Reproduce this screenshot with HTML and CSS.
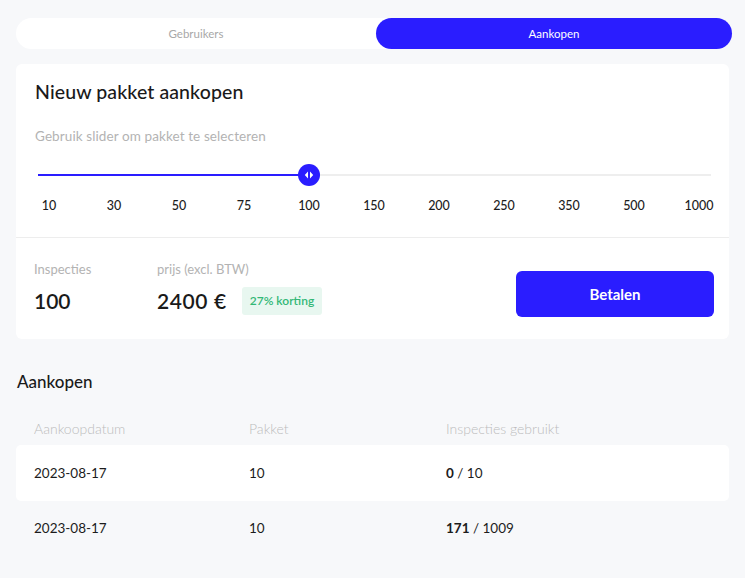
FILE: index.html
```html
<!DOCTYPE html>
<html lang="nl">
<head>
<meta charset="utf-8">
<link rel="stylesheet" href="styles.css">
</head>
<body>
<div class="page">
  <div class="tabs">
    <div class="tab">Gebruikers</div>
    <div class="tab active">Aankopen</div>
  </div>

  <div class="card">
    <div class="card-top">
      <h1 class="title">Nieuw pakket aankopen</h1>
      <p class="hint">Gebruik slider om pakket te selecteren</p>
      <div class="slider">
        <div class="track">
          <div class="fill" style="width: 271px"></div>
          <div class="thumb" style="left: 271px">
            <svg width="10" height="8" viewBox="0 0 10 8"><path d="M4 0.5 L0.8 4 L4 7.5 Z M6 0.5 L9.2 4 L6 7.5 Z" fill="#fff"/></svg>
          </div>
        </div>
        <div class="ticks">
          <span>10</span><span>30</span><span>50</span><span>75</span><span>100</span><span>150</span><span>200</span><span>250</span><span>350</span><span>500</span><span>1000</span>
        </div>
      </div>
    </div>
    <div class="card-bottom">
      <div class="stat">
        <div class="stat-label">Inspecties</div>
        <div class="stat-value">100</div>
      </div>
      <div class="stat price">
        <div class="stat-label">prijs (excl. BTW)</div>
        <div class="price-row">
          <div class="stat-value">2400 €</div>
          <span class="badge">27% korting</span>
        </div>
      </div>
      <button class="pay">Betalen</button>
    </div>
  </div>

  <h2 class="section">Aankopen</h2>
  <div class="table">
    <div class="row head">
      <div>Aankoopdatum</div><div>Pakket</div><div>Inspecties gebruikt</div>
    </div>
    <div class="row odd">
      <div>2023-08-17</div><div>10</div><div><b>0</b> / 10</div>
    </div>
    <div class="row">
      <div>2023-08-17</div><div>10</div><div><b>171</b> / 1009</div>
    </div>
  </div>
</div>
</body>
</html>
```
FILE: styles.css
```css
* { box-sizing: border-box; }
html, body { margin: 0; padding: 0; }
body {
  background: #f7f8fa;
  font-family: Lato, "Noto Sans", sans-serif;
  color: #1c1c1c;
  width: 745px;
  height: 578px;
  overflow: hidden;
}
.page {
  padding: 18px 13px 0 16px;
}
.tabs {
  display: flex;
  height: 31px;
  background: #fff;
  border-radius: 16px;
}
.tab {
  flex: 0 0 360px;
  display: flex;
  align-items: center;
  justify-content: center;
  font-size: 11.5px;
  color: #a8a8a8;
  border-radius: 16px;
}
.tab.active {
  flex: 1;
  background: #2a1dff;
  color: #fff;
}
.card {
  margin-top: 15px;
  width: 713px;
  background: #fff;
  border-radius: 6px;
}
.card-top {
  padding: 17px 16px 0 19px;
  border-bottom: 1px solid #ededed;
  height: 174px;
}
.title {
  margin: 0;
  font-size: 19.5px;
  font-weight: 500;
  line-height: 22px;
  letter-spacing: 0.1px;
  color: #1a1a1a;
}
.hint {
  margin: 25px 0 0 0;
  font-size: 13.5px;
  line-height: 16px;
  letter-spacing: 0.1px;
  color: #b3b3b3;
}
.slider {
  margin-top: 30px;
  padding-left: 3px;
}
.track {
  position: relative;
  width: 673px;
  height: 2px;
  background: #eeeeee;
}
.fill {
  height: 2px;
  background: #2a1dff;
}
.thumb {
  position: absolute;
  top: -10px;
  margin-left: -11px;
  width: 22px;
  height: 22px;
  border-radius: 50%;
  background: #2a1dff;
  display: flex;
  align-items: center;
  justify-content: center;
}
.ticks {
  display: flex;
  justify-content: space-between;
  margin-top: 23px;
  width: 690px;
  margin-left: -9px;
}
.ticks span {
  width: 40px;
  text-align: center;
  font-size: 12.5px;
  font-weight: 500;
  color: #1c1c1c;
  line-height: 14px;
}
.card-bottom {
  display: flex;
  align-items: flex-start;
  padding: 23px 15px 21px 18px;
  height: 101px;
}
.stat-label {
  font-size: 13px;
  color: #b3b3b3;
  line-height: 16px;
}
.stat-value {
  font-size: 21px;
  font-weight: 600;
  line-height: 24px;
  margin-top: 12px;
  color: #1a1a1a;
}
.stat { width: 123px; }
.price { width: 200px; }
.price .stat-value { letter-spacing: 0.6px; }
.price-row {
  display: flex;
  align-items: flex-end;
}
.price-row .badge {
  margin-left: 15px;
  background: #e8f7f0;
  color: #33b877;
  font-size: 12px;
  font-weight: 600;
  padding: 0 8px;
  height: 28px;
  line-height: 28px;
  border-radius: 3px;
  margin-bottom: -2px;
}
.pay {
  margin-left: auto;
  margin-top: 10px;
  width: 198px;
  height: 46px;
  border: none;
  border-radius: 6px;
  background: #2a1dff;
  color: #fff;
  font-family: inherit;
  font-size: 15px;
  font-weight: 700;
}
.section {
  margin: 33px 0 0 1px;
  font-size: 17px;
  font-weight: 500;
  line-height: 20px;
  color: #1a1a1a;
}
.table {
  margin-top: 19px;
  width: 713px;
}
.row {
  display: grid;
  grid-template-columns: 215px 197px 1fr;
  padding-left: 18px;
  height: 56px;
  align-items: center;
  font-size: 13.5px;
  color: #1c1c1c;
  font-weight: 400;
}
.row b { font-weight: 700; }
.row.head {
  height: 34px;
  color: #bcbcbc;
  font-size: 14px;
  font-weight: 300;
}
.row.odd {
  background: #fff;
  border-radius: 5px;
}
.row.odd + .row { height: 54px; }
```
